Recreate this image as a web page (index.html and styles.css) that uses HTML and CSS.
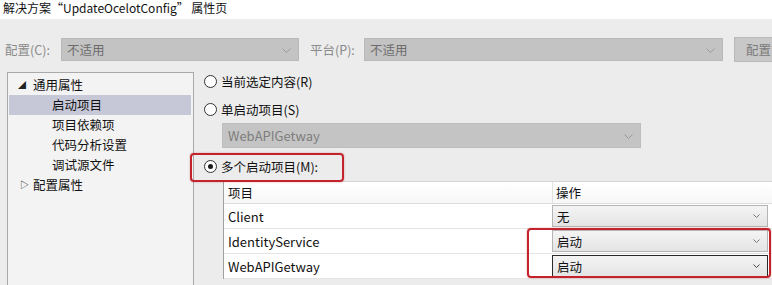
FILE: index.html
```html
<!DOCTYPE html>
<html lang="zh">
<head>
<meta charset="utf-8">
<title>属性页</title>
<link rel="stylesheet" href="styles.css">
</head>
<body>
<div class="titlebar">解决方案“UpdateOcelotConfig” 属性页</div>
<div class="toolbar">
  <span class="lbl">配置(C):</span>
  <div class="combo dis w-conf"><span>不适用</span><svg class="chev" width="9" height="5" viewBox="0 0 9 5"><polyline points="0.5,0.5 4.5,4.5 8.5,0.5" fill="none" stroke="#9a9a9a" stroke-width="1"/></svg></div>
  <span class="lbl lbl-plat">平台(P):</span>
  <div class="combo dis w-plat"><span>不适用</span><svg class="chev" width="9" height="5" viewBox="0 0 9 5"><polyline points="0.5,0.5 4.5,4.5 8.5,0.5" fill="none" stroke="#9a9a9a" stroke-width="1"/></svg></div>
  <div class="btn">配置管</div>
</div>
<div class="main">
  <div class="tree">
    <div class="node top"><span class="tw">◢</span>通用属性</div>
    <div class="node child sel">启动项目</div>
    <div class="node child">项目依赖项</div>
    <div class="node child">代码分析设置</div>
    <div class="node child">调试源文件</div>
    <div class="node top"><span class="tw open">▷</span>配置属性</div>
  </div>
  <div class="content">
    <label class="radio r1"><span class="rb"></span>当前选定内容(R)</label>
    <label class="radio r2"><span class="rb"></span>单启动项目(S)</label>
    <div class="combo dis w-single"><span class="wg">WebAPIGetway</span><svg class="chev" width="9" height="5" viewBox="0 0 9 5"><polyline points="0.5,0.5 4.5,4.5 8.5,0.5" fill="none" stroke="#9a9a9a" stroke-width="1"/></svg></div>
    <label class="radio r3"><span class="rb on"></span>多个启动项目(M):</label>
    <div class="grid">
      <div class="hd c1">项目</div><div class="hd c2">操作</div>
      <div class="cell c1">Client</div><div class="cell c2"><div class="dd"><span>无</span><svg class="chev" width="7" height="4" viewBox="0 0 7 4"><polyline points="0.5,0.5 3.5,3.5 6.5,0.5" fill="none" stroke="#777" stroke-width="1"/></svg></div></div>
      <div class="cell c1">IdentityService</div><div class="cell c2"><div class="dd"><span>启动</span><svg class="chev" width="7" height="4" viewBox="0 0 7 4"><polyline points="0.5,0.5 3.5,3.5 6.5,0.5" fill="none" stroke="#777" stroke-width="1"/></svg></div></div>
      <div class="cell c1">WebAPIGetway</div><div class="cell c2"><div class="dd focus"><span>启动</span><svg class="chev" width="7" height="4" viewBox="0 0 7 4"><polyline points="0.5,0.5 3.5,3.5 6.5,0.5" fill="none" stroke="#444" stroke-width="1"/></svg></div></div>
    </div>
  </div>
</div>
<div class="mark mark1"></div>
<div class="mark mark2"></div>
</body>
</html>
```
FILE: styles.css
```css
html, body {
  margin: 0;
  padding: 0;
}
body {
  width: 772px;
  height: 285px;
  overflow: hidden;
  background: #ececec;
  font-family: "Noto Sans CJK SC", "Noto Sans", sans-serif;
  font-size: 12.5px;
  color: #1a1a1a;
  position: relative;
}
.titlebar {
  height: 19px;
  background: #ffffff;
  padding-left: 3px;
  font-size: 12px;
  line-height: 16px;
  color: #111;
  white-space: nowrap;
}
.toolbar {
  display: flex;
  align-items: center;
  margin-top: 18px;
  height: 25px;
  white-space: nowrap;
  overflow: hidden;
}
.lbl {
  color: #8a8a8a;
  margin-left: 5px;
  width: 56px;
  flex: none;
}
.lbl-plat {
  margin-left: 11px;
  width: 54px;
}
.combo {
  display: flex;
  align-items: center;
  justify-content: space-between;
  height: 23px;
  box-sizing: border-box;
  border: 1px solid #b9b9b9;
  background: #c3c3c3;
  color: #6c6c6c;
  padding: 0 7px 0 5px;
  flex: none;
}
.combo .chev { margin-top: 1px; }
.w-conf { width: 238px; }
.w-plat { width: 359px; }
.btn {
  margin-left: 11px;
  height: 25px;
  box-sizing: border-box;
  border: 1px solid #b9b9b9;
  border-right: none;
  background: #c8c8c8;
  color: #7a7a7a;
  padding: 0 0 0 11px;
  line-height: 23px;
  flex: 1;
  min-width: 0;
  overflow: hidden;
}
.main {
  display: flex;
  margin-top: 10px;
}
.tree {
  margin-left: 7px;
  width: 187px;
  height: 213px;
  box-sizing: border-box;
  border: 1px solid #a9a9a9;
  border-bottom: none;
  background: #f3f3f3;
  padding-top: 2px;
  flex: none;
}
.node {
  height: 20px;
  line-height: 20px;
  white-space: nowrap;
  margin: 0 2px 0 1px;
  color: #111;
}
.node.top { padding-left: 9px; }
.node.child { padding-left: 43px; }
.node.sel { background: #c6c8d7; }
.tw {
  display: inline-block;
  width: 15px;
  font-size: 8px;
  color: #222;
  vertical-align: top;
  line-height: 20px;
}
.tw.open {
  font-size: 9px;
  padding-left: 2px;
  width: 13px;
}
.content {
  flex: 1;
  display: flex;
  flex-direction: column;
  padding-left: 10px;
  padding-top: 1px;
  min-width: 0;
  height: 213px;
  overflow: hidden;
}
.radio {
  display: flex;
  align-items: center;
  height: 16px;
  white-space: nowrap;
  color: #111;
  flex: none;
}
.r2 { margin-top: 12px; }
.r3 { margin-top: 10px; }
.rb {
  width: 11px;
  height: 11px;
  border: 1px solid #333;
  border-radius: 50%;
  background: #fff;
  margin-right: 4px;
  position: relative;
  flex: none;
}
.rb.on::after {
  content: "";
  position: absolute;
  left: 3px;
  top: 3px;
  width: 5px;
  height: 5px;
  border-radius: 50%;
  background: #1a1a1a;
}
.w-single {
  width: 419px;
  margin-left: 18px;
  margin-top: 6px;
  height: 25px;
  background: #c4c4c4;
  border-color: #bdbdbd;
  font-size: 13px;
}
.w-single .wg { color: #7d7d7d; }
.grid {
  margin-left: 19px;
  margin-top: 7px;
  display: grid;
  grid-template-columns: 328px 222px;
  background: #ffffff;
  border-left: 1px solid #a0a0a0;
  border-top: 1px solid #d5d5d5;
  flex: none;
}
.hd {
  height: 21px;
  line-height: 21px;
  padding-left: 4px;
  background: linear-gradient(#ffffff, #f7f7f7);
  border-bottom: 1px solid #dcdcdc;
  color: #111;
}
.hd.c2 { border-left: 1px solid #e2e2e2; padding-left: 3px; }
.cell {
  height: 25px;
  box-sizing: border-box;
  border-bottom: 1px solid #e4e4e4;
  display: flex;
  align-items: center;
}
.cell.c1 { padding-left: 4px; font-size: 13px; color: #111; }
.cell.c2 { padding-left: 0; }
.dd {
  width: 216px;
  height: 22px;
  box-sizing: border-box;
  border: 1px solid #b4b4b4;
  background: linear-gradient(#f4f4f4, #e4e4e4);
  display: flex;
  align-items: center;
  justify-content: space-between;
  padding: 0 7px 0 4px;
  color: #111;
}
.dd.focus { border-color: #2b2b2b; }
.mark {
  position: absolute;
  border: 2px solid #c4232c;
  border-radius: 4px;
  box-shadow: 0 0 2px rgba(160, 20, 30, 0.4);
}
.mark1 {
  left: 190px;
  top: 153px;
  width: 150px;
  height: 25px;
}
.mark2 {
  left: 527px;
  top: 228px;
  width: 240px;
  height: 46px;
}
```
